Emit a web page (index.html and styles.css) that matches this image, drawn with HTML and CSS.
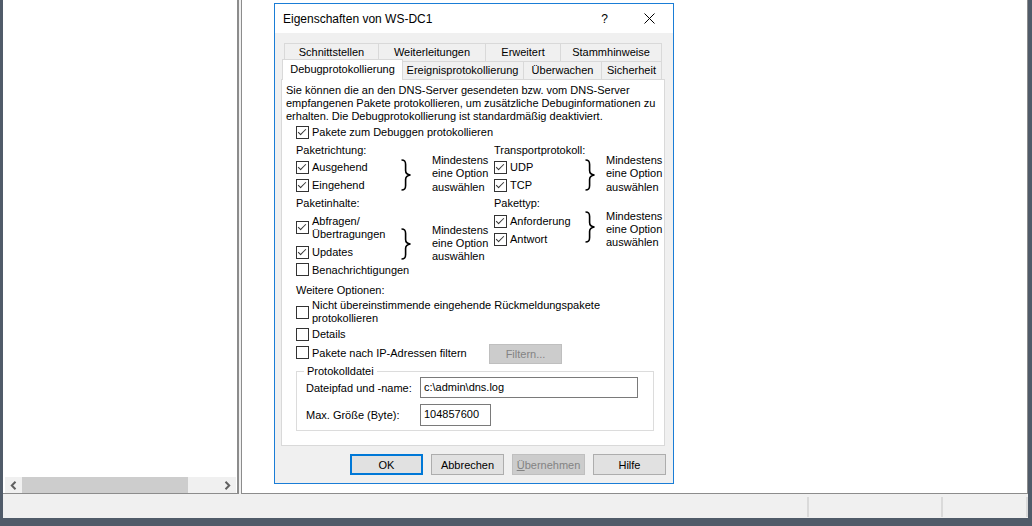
FILE: index.html
```html
<!DOCTYPE html>
<html lang="de">
<head>
<meta charset="utf-8">
<title>Eigenschaften von WS-DC1</title>
<link rel="stylesheet" href="styles.css">
</head>
<body>
<div class="app">
  <div class="panes">
    <div class="left-pane">
      <div class="left-body"></div>
      <div class="hscroll">
        <span class="sb-arrow"><svg width="7" height="9" viewBox="0 0 7 9"><path d="M5.5 0.8 L1.8 4.5 L5.5 8.2" fill="none" stroke="#606060" stroke-width="2"/></svg></span>
        <div class="sb-track"><div class="sb-thumb"></div></div>
        <span class="sb-arrow"><svg width="7" height="9" viewBox="0 0 7 9"><path d="M1.5 0.8 L5.2 4.5 L1.5 8.2" fill="none" stroke="#606060" stroke-width="2"/></svg></span>
      </div>
    </div>
    <div class="splitter"></div>
    <div class="right-pane"></div>
  </div>
  <div class="statusbar">
    <div class="sb-cell c1"></div>
    <div class="sb-cell c2"></div>
    <div class="sb-cell c3"></div>
  </div>
</div>

<div class="dialog">
  <div class="titlebar">
    <span class="title">Eigenschaften von WS-DC1</span>
    <span class="help">?</span>
    <svg class="close" width="11" height="11" viewBox="0 0 11 11"><path d="M0.5 0.5 L10.5 10.5 M10.5 0.5 L0.5 10.5" stroke="#000" stroke-width="1"/></svg>
  </div>
  <div class="dlg-body">
    <div class="tabrow row1">
      <div class="tab">Schnittstellen</div>
      <div class="tab">Weiterleitungen</div>
      <div class="tab">Erweitert</div>
      <div class="tab last">Stammhinweise</div>
    </div>
    <div class="tabrow row2">
      <div class="tab sel">Debugprotokollierung</div>
      <div class="tab">Ereignisprotokollierung</div>
      <div class="tab">Überwachen</div>
      <div class="tab last">Sicherheit</div>
    </div>
    <div class="panel">
      <p class="intro">Sie können die an den DNS-Server gesendeten bzw. vom DNS-Server<br>empfangenen Pakete protokollieren, um zusätzliche Debuginformationen zu<br>erhalten. Die Debugprotokollierung ist standardmäßig deaktiviert.</p>
      <div class="opts">
        <div class="cb"><span class="box on"></span><span>Pakete zum Debuggen protokollieren</span></div>

        <div class="cols">
          <div class="col">
            <div class="lbl">Paketrichtung:</div>
            <div class="grp g-dir">
              <div class="list wl">
                <div class="cb"><span class="box on"></span><span>Ausgehend</span></div>
                <div class="cb"><span class="box on"></span><span>Eingehend</span></div>
              </div>
              <svg class="brace" width="12" height="32" viewBox="0 0 12 32"><path d="M1.5 1 C5 1 5.6 2.6 5.6 5.5 L5.6 11.5 C5.6 14.2 6.8 15.6 10.5 16 C6.8 16.4 5.6 17.8 5.6 20.5 L5.6 26.5 C5.6 29.4 5 31 1.5 31" fill="none" stroke="#000" stroke-width="1.6"/></svg>
              <div class="note nl">Mindestens<br>eine Option<br>auswählen</div>
            </div>
            <div class="lbl">Paketinhalte:</div>
            <div class="grp g-con">
              <div class="list wl">
                <div class="cb two"><span class="box on"></span><span>Abfragen/<br>Übertragungen</span></div>
                <div class="cb upd"><span class="box on"></span><span>Updates</span></div>
              </div>
              <svg class="brace" width="12" height="32" viewBox="0 0 12 32"><path d="M1.5 1 C5 1 5.6 2.6 5.6 5.5 L5.6 11.5 C5.6 14.2 6.8 15.6 10.5 16 C6.8 16.4 5.6 17.8 5.6 20.5 L5.6 26.5 C5.6 29.4 5 31 1.5 31" fill="none" stroke="#000" stroke-width="1.6"/></svg>
              <div class="note nl">Mindestens<br>eine Option<br>auswählen</div>
            </div>
            <div class="cb short"><span class="box"></span><span>Benachrichtigungen</span></div>
          </div>
          <div class="col">
            <div class="lbl">Transportprotokoll:</div>
            <div class="grp g-dir">
              <div class="list wr">
                <div class="cb"><span class="box on"></span><span>UDP</span></div>
                <div class="cb"><span class="box on"></span><span>TCP</span></div>
              </div>
              <svg class="brace" width="12" height="32" viewBox="0 0 12 32"><path d="M1.5 1 C5 1 5.6 2.6 5.6 5.5 L5.6 11.5 C5.6 14.2 6.8 15.6 10.5 16 C6.8 16.4 5.6 17.8 5.6 20.5 L5.6 26.5 C5.6 29.4 5 31 1.5 31" fill="none" stroke="#000" stroke-width="1.6"/></svg>
              <div class="note nr">Mindestens<br>eine Option<br>auswählen</div>
            </div>
            <div class="lbl">Pakettyp:</div>
            <div class="grp g-typ">
              <div class="list wr">
                <div class="cb"><span class="box on"></span><span>Anforderung</span></div>
                <div class="cb"><span class="box on"></span><span>Antwort</span></div>
              </div>
              <svg class="brace" width="12" height="32" viewBox="0 0 12 32"><path d="M1.5 1 C5 1 5.6 2.6 5.6 5.5 L5.6 11.5 C5.6 14.2 6.8 15.6 10.5 16 C6.8 16.4 5.6 17.8 5.6 20.5 L5.6 26.5 C5.6 29.4 5 31 1.5 31" fill="none" stroke="#000" stroke-width="1.6"/></svg>
              <div class="note nr">Mindestens<br>eine Option<br>auswählen</div>
            </div>
          </div>
        </div>

        <div class="lbl more">Weitere Optionen:</div>
        <div class="cb two2"><span class="box"></span><span>Nicht übereinstimmende eingehende Rückmeldungspakete<br>protokollieren</span></div>
        <div class="cb"><span class="box"></span><span>Details</span></div>
        <div class="filter-row">
          <div class="cb fw"><span class="box"></span><span>Pakete nach IP-Adressen filtern</span></div>
          <div class="btn disabled filter">Filtern...</div>
        </div>

        <div class="group">
          <span class="legend">Protokolldatei</span>
          <div class="frow r1"><span class="flabel">Dateipfad und -name:</span><div class="input wide">c:\admin\dns.log</div></div>
          <div class="frow r2"><span class="flabel">Max. Größe (Byte):</span><div class="input narrow">104857600</div></div>
        </div>
      </div>
    </div>
    <div class="buttons">
      <div class="btn default">OK</div>
      <div class="btn">Abbrechen</div>
      <div class="btn disabled"><u>Ü</u>bernehmen</div>
      <div class="btn">Hilfe</div>
    </div>
  </div>
</div>
</body>
</html>
```

FILE: styles.css
```css
* { box-sizing: border-box; }
html, body { margin: 0; padding: 0; }
body {
  width: 1032px;
  height: 526px;
  overflow: hidden;
  background: #505b69;
  font-family: "Liberation Sans", Arial, sans-serif;
  font-size: 11px;
  color: #000;
  position: relative;
}

/* ---------- background application ---------- */
.app {
  margin-left: 3px;
  width: 1025px;
  height: 518px;
  background: #f0f0f0;
  display: flex;
  flex-direction: column;
}
.panes {
  height: 494px;
  display: flex;
}
.left-pane {
  width: 236px;
  background: #fff;
  border-right: 2px solid #8c8c8c;
  border-bottom: 1px solid #8c8c8c;
  display: flex;
  flex-direction: column;
}
.left-body { flex: 1; }
.hscroll {
  height: 16px;
  margin: 0 1px 0 2px;
  background: #f0f0f0;
  display: flex;
  align-items: center;
}
.sb-arrow {
  width: 17px;
  height: 16px;
  display: flex;
  align-items: center;
  justify-content: center;
}
.sb-track { flex: 1; height: 16px; }
.sb-thumb { width: 166px; height: 16px; background: #cdcdcd; }
.splitter { width: 2px; }
.right-pane {
  flex: 1;
  background: #fff;
  border: 1px solid #8c8c8c;
  border-top: none;
}
.statusbar {
  height: 24px;
  display: flex;
  padding: 3px 0 1px;
}
.sb-cell { border-right: 2px solid #dadada; }
.c1 { width: 806px; }
.c2 { width: 134px; }
.c3 { width: 85px; }

/* ---------- dialog ---------- */
.dialog {
  position: absolute;
  left: 274px;
  top: 3px;
  width: 400px;
  height: 481px;
  border: 1px solid #1a7dd6;
  background: #f0f0f0;
  display: flex;
  flex-direction: column;
}
.titlebar {
  height: 29px;
  background: #fff;
  display: flex;
  align-items: center;
  padding: 0 18px 0 8px;
  font-size: 12px;
}
.title { flex: 1; padding-top: 1px; }
.help { margin-right: 36px; font-size: 12px; padding-top: 1px; }
.close { display: block; }

.dlg-body { flex: 1; padding-top: 10px; }

.tabrow {
  display: grid;
  margin-left: 9px;
  height: 18px;
}
.row1 { grid-template-columns: 94px 107px 75px 102px; }
.row2 { grid-template-columns: 117px 122px 78px 61px; position: relative; z-index: 2; }
.tab {
  border-top: 1px solid #d9d9d9;
  border-left: 1px solid #d9d9d9;
  background: #f0f0f0;
  text-align: center;
  line-height: 17px;
  white-space: nowrap;
}
.tab.last { border-right: 1px solid #d9d9d9; }
.tab.sel {
  background: #fff;
  border-right: 1px solid #d9d9d9;
  margin: -2px -2px -1px -2px;
  line-height: 18px;
  position: relative;
  z-index: 3;
}

.panel {
  margin-left: 6px;
  width: 384px;
  height: 367px;
  background: #fff;
  border: 1px solid #d9d9d9;
  padding: 4px 0 0 4px;
  position: relative;
  z-index: 1;
}
.intro {
  margin: 0;
  line-height: 13px;
  white-space: nowrap;
}
.opts { margin-left: 10px; }

.cb {
  display: flex;
  align-items: center;
  height: 18px;
  white-space: nowrap;
}
.box {
  width: 13px;
  height: 13px;
  flex: none;
  border: 1px solid #333;
  background: #fff;
  margin-right: 3px;
  position: relative;
}
.box.on::after {
  content: "";
  position: absolute;
  left: 3px;
  top: 0px;
  width: 3px;
  height: 7px;
  border-right: 1px solid #333;
  border-bottom: 1px solid #333;
  transform: rotate(45deg);
}
.cb.two { height: 27px; line-height: 13px; }
.cb.upd { margin-top: 2px; }
.cb.short { height: 17px; margin-top: -2px; }
.cb.two2 { height: 26px; line-height: 13.5px; margin-top: 2px; }

.lbl { height: 14px; line-height: 14px; margin-top: 2px; }
.lbl.more { margin-top: 5px; }

.cols {
  display: grid;
  grid-template-columns: 198px 1fr;
}
.grp { display: flex; align-items: flex-start; }
.g-dir { margin-top: 1px; }
.g-con { margin-top: 4px; }
.g-typ { margin-top: 2px; }
.list.wl { width: 104px; }
.list.wr { width: 90px; }
.brace { flex: none; display: block; }
.note { line-height: 13.5px; white-space: nowrap; }
.nl { margin-left: 20px; }
.nr { margin-left: 10px; }
.g-dir .brace { margin-top: 1px; }
.g-dir .note { margin-top: -4.5px; }
.g-con .brace { margin-top: 14px; }
.g-con .note { margin-top: 10px; line-height: 13px; }
.g-typ .brace { margin-top: -1px; }
.g-typ .note { margin-top: -2.5px; line-height: 13px; }

.filter-row { display: flex; align-items: flex-start; height: 21px; }
.filter-row .cb { width: 193px; height: 19px; }
.filter { margin-top: 1px; }

.btn {
  width: 73px;
  height: 21px;
  background: #e1e1e1;
  border: 1px solid #adadad;
  display: flex;
  align-items: center;
  justify-content: center;
  white-space: nowrap;
}
.btn.default { border: 2px solid #0078d7; }
.btn.disabled { background: #cccccc; border-color: #bfbfbf; color: #838383; }
.btn.filter { height: 20px; }

.group {
  position: relative;
  margin-top: 7px;
  width: 358px;
  border: 1px solid #dcdcdc;
  padding: 0 0 4px 9px;
}
.legend {
  position: absolute;
  left: 7px;
  top: -8px;
  background: #fff;
  padding: 0 3px;
  line-height: 14px;
}
.frow { display: flex; align-items: center; }
.frow.r1 { margin-top: 5px; height: 21px; }
.frow.r2 { margin-top: 6px; height: 22px; }
.flabel { width: 114px; white-space: nowrap; }
.input {
  height: 100%;
  border: 1px solid #7a7a7a;
  background: #fff;
  padding: 2px 0 0 3px;
  line-height: 14px;
}
.input.wide { width: 218px; }
.input.narrow { width: 71px; }

.buttons {
  display: flex;
  justify-content: flex-end;
  gap: 8px;
  margin-top: 8px;
  padding-right: 7px;
}
```
